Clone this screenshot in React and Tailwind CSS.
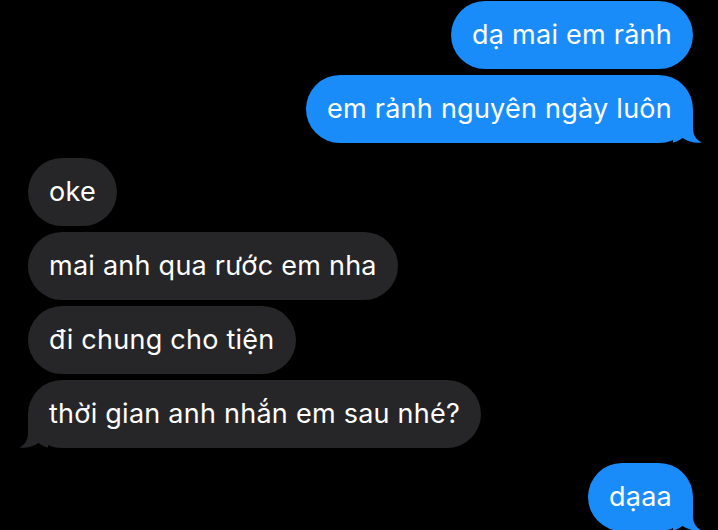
import React from 'react';

// iMessage-style tail: bubble edge sits at x=20 inside the svg
const Tail = ({ side, color }) => {
  const isRight = side === 'right';
  return (
    <svg
      width="29"
      height="34"
      viewBox="0 0 29 34"
      className={`absolute bottom-0 ${isRight ? '-right-[9px]' : '-left-[9px] -scale-x-100'}`}
    >
      <path
        d="M0 0 H20 V19 C20 26 23 30.5 28.5 33.5 C22 34.5 15 32.5 9.5 29 C6 31.5 3 33 0 33.5 Z"
        fill={color}
      />
    </svg>
  );
};

const Bubble = ({ text, me, tail }) => {
  const color = me ? '#1a8cfa' : '#262628';
  return (
    <div className={`flex ${me ? 'justify-end pr-[25px]' : 'justify-start pl-[28px]'}`}>
      <div
        className={`relative h-[68px] flex items-center px-[21px] rounded-[34px] text-white text-[27px] tracking-[0.25px] ${me ? 'bg-[#1a8cfa]' : 'bg-[#262628]'}`}
      >
        {tail && <Tail side={me ? 'right' : 'left'} color={color} />}
        <span className="relative">{text}</span>
      </div>
    </div>
  );
};

const messages = [
  { text: 'dạ mai em rảnh', me: true },
  { text: 'em rảnh nguyên ngày luôn', me: true, tail: true },
  { text: 'oke', gap: true },
  { text: 'mai anh qua rước em nha' },
  { text: 'đi chung cho tiện' },
  { text: 'thời gian anh nhắn em sau nhé?', tail: true },
  { text: 'dạaa', me: true, tail: true, gap: true },
];

export default function App() {
  return (
    <div
      className="w-[718px] h-[530px] overflow-hidden bg-black flex flex-col pt-[1px]"
      style={{ fontFamily: 'Inter, "Noto Sans", sans-serif' }}
    >
      {messages.map((m, i) => (
        <div key={i} className={i === 0 ? '' : m.gap ? 'mt-[15px]' : 'mt-[6px]'}>
          <Bubble {...m} />
        </div>
      ))}
    </div>
  );
}
